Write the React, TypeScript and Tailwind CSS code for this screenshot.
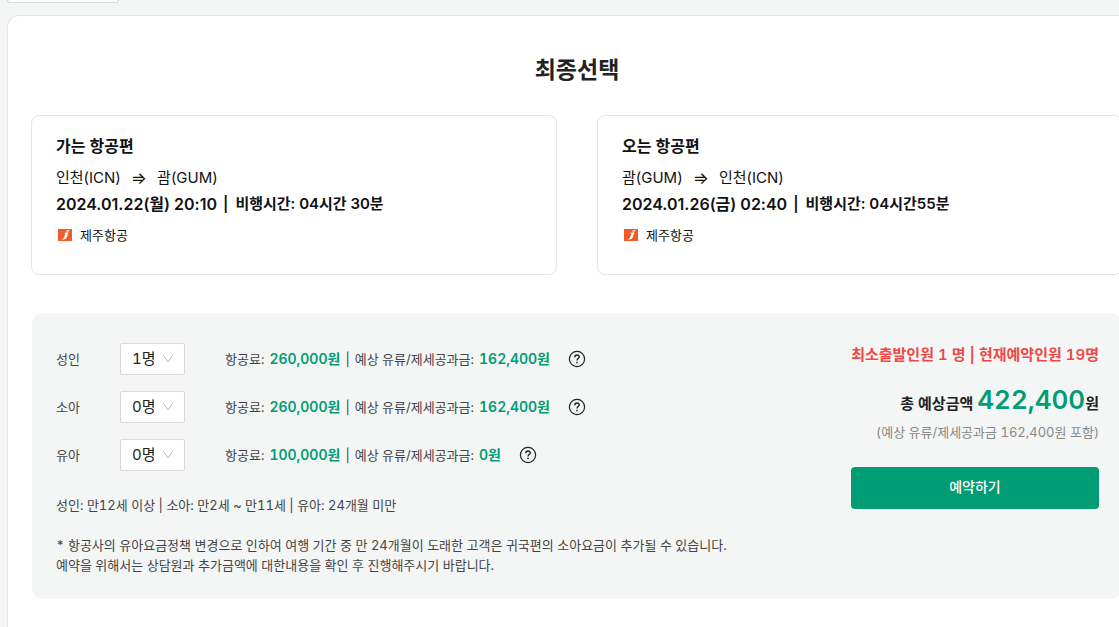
import { useState } from "react";

type Flight = {
  title: string;
  from: string;
  to: string;
  departure: string;
  duration: string;
  airline: string;
};

type Fare = {
  id: string;
  label: string;
  count: number;
  fare: string;
  tax: string;
};

const flights: Flight[] = [
  {
    title: "가는 항공편",
    from: "인천(ICN)",
    to: "괌(GUM)",
    departure: "2024.01.22(월) 20:10",
    duration: "비행시간: 04시간 30분",
    airline: "제주항공",
  },
  {
    title: "오는 항공편",
    from: "괌(GUM)",
    to: "인천(ICN)",
    departure: "2024.01.26(금) 02:40",
    duration: "비행시간: 04시간55분",
    airline: "제주항공",
  },
];

const fares: Fare[] = [
  { id: "adult", label: "성인", count: 1, fare: "260,000원", tax: "162,400원" },
  { id: "child", label: "소아", count: 0, fare: "260,000원", tax: "162,400원" },
  { id: "infant", label: "유아", count: 0, fare: "100,000원", tax: "0원" },
];

function AirlineLogo() {
  return (
    <svg width="14" height="12" viewBox="0 0 14 12" aria-hidden="true">
      <rect width="14" height="12" fill="#f15a29" />
      <path d="M6.6 3.7 10.4 3.2 8.9 7.9C8.3 9.8 6.4 10.8 2.4 10.5 4.6 10 5.7 9.3 6.2 7.9L7.4 4.5 6.4 4.5Z" fill="#fff" />
      <path d="M8.6 1.6 11.6 1 11.1 2.3 8.3 2.7Z" fill="#fff" />
    </svg>
  );
}

function HelpIcon() {
  return (
    <svg width="18" height="18" viewBox="0 0 18 18" fill="none" stroke="#222" aria-hidden="true">
      <circle cx="9" cy="9" r="7.6" strokeWidth="1.2" />
      <path d="M6.8 7.2C6.8 5.9 7.7 5 9 5s2.2.8 2.2 2c0 1.5-2.2 1.7-2.2 3.4" strokeWidth="1.4" />
      <path d="M9 11.7v1.5" strokeWidth="1.5" />
    </svg>
  );
}

function FlightCard({ flight }: { flight: Flight }) {
  return (
    <section className="rounded-lg border border-[#e5e5e5] px-6 pt-[17px] pb-[26px] text-[#111]">
      <h2 className="mb-1.5 text-base leading-[26px] font-semibold">{flight.title}</h2>
      <p className="flex gap-2.5 text-[15px] leading-[26px]">
        <span>{flight.from}</span>
        <span className="text-[17px]">⇒</span>
        <span>{flight.to}</span>
      </p>
      <p className="flex gap-1.5 text-[15px] leading-[26px] font-semibold">
        <span className="text-base leading-[26px]">{flight.departure}</span>
        <span>|</span>
        <span className="pl-px">{flight.duration}</span>
      </p>
      <p className="mt-[5px] flex items-center gap-2 pl-0.5 text-[13px] leading-[26px]">
        <AirlineLogo />
        {flight.airline}
      </p>
    </section>
  );
}

function FareRow({ item }: { item: Fare }) {
  const [count, setCount] = useState(item.count);
  return (
    <div className="flex h-8 items-center text-[13px]">
      <label htmlFor={item.id} className="w-16">
        {item.label}
      </label>
      <div className="relative">
        <select
          id={item.id}
          value={count}
          onChange={(e) => setCount(Number(e.target.value))}
          className="block h-8 w-[65px] appearance-none rounded-xs border border-[#d9d9d9] bg-white pl-[11px] text-[15px] text-[#222]"
        >
          {[0, 1, 2, 3, 4, 5, 6, 7, 8, 9].map((n) => (
            <option key={n} value={n}>
              {n}명
            </option>
          ))}
        </select>
        <svg
          className="pointer-events-none absolute top-2.5 right-[11px]"
          width="12"
          height="12"
          viewBox="0 0 12 12"
          fill="none"
          stroke="#b5b5b5"
          aria-hidden="true"
        >
          <path d="M1.2 2 6 9 10.8 2" />
        </svg>
      </div>
      <p className="ml-10 flex items-baseline gap-[5px]">
        <span>항공료:</span>
        <strong className="text-sm font-semibold text-[#009c74]">{item.fare}</strong>
        <span>|</span>
        <span>예상 유류/제세공과금:</span>
        <strong className="text-sm font-semibold text-[#009c74]">{item.tax}</strong>
      </p>
      <button type="button" aria-label={`${item.label} 요금 안내`} className="ml-[18px]">
        <HelpIcon />
      </button>
    </div>
  );
}

export default function App() {
  return (
    <div
      lang="ko"
      className="min-h-screen overflow-x-hidden bg-[#f4f6f5] pl-[7px] font-['Inter','Noto_Sans_CJK_KR',sans-serif] text-[#222]"
    >
      <div className="h-[3px] w-28 rounded-b-sm border border-t-0 border-[#cfdbd8] bg-white" />
      <main className="mt-3 min-h-[calc(100vh-15px)] min-w-[1140px] rounded-tl-xl border border-b-0 border-[#e5e5e5] bg-white px-[23px] pt-9">
        <h1 className="text-center text-[23px] leading-9 font-semibold">최종선택</h1>
        <div className="mt-[27px] grid grid-cols-2 gap-10">
          {flights.map((flight) => (
            <FlightCard key={flight.title} flight={flight} />
          ))}
        </div>
        <section className="mt-[37px] flex justify-between rounded-xl border border-white bg-[#f4f6f5] bg-clip-padding pt-[30px] pr-[23px] pb-6 pl-6 text-[#444] tabular-nums">
          <div className="text-[13px] leading-5">
            <div className="flex flex-col gap-4">
              {fares.map((item) => (
                <FareRow key={item.id} item={item} />
              ))}
            </div>
            <p className="mt-6">성인: 만12세 이상 | 소아: 만2세 ~ 만11세 | 유아: 24개월 미만</p>
            <p className="mt-5">
              * 항공사의 유아요금정책 변경으로 인하여 여행 기간 중 만 24개월이 도래한 고객은 귀국편의 소아요금이 추가될
              수 있습니다.
              <br />
              예약을 위해서는 상담원과 추가금액에 대한내용을 확인 후 진행해주시기 바랍니다.
            </p>
          </div>
          <div className="text-right whitespace-nowrap">
            <p className="text-[15px] leading-6 font-semibold text-[#f04646]">최소출발인원 1 명 | 현재예약인원 19명</p>
            <p className="mt-[15px] text-[15px] leading-9 font-semibold text-[#222]">
              총 예상금액 <strong className="text-[26px] font-semibold text-[#009c74]">422,400</strong>원
            </p>
            <p className="text-[13px] leading-5 text-[#888]">(예상 유류/제세공과금 162,400원 포함)</p>
            <button
              type="button"
              className="mt-[25px] h-[42px] w-full min-w-[248px] rounded-sm bg-[#009c74] pb-0.5 text-sm font-medium text-white"
            >
              예약하기
            </button>
          </div>
        </section>
      </main>
    </div>
  );
}
